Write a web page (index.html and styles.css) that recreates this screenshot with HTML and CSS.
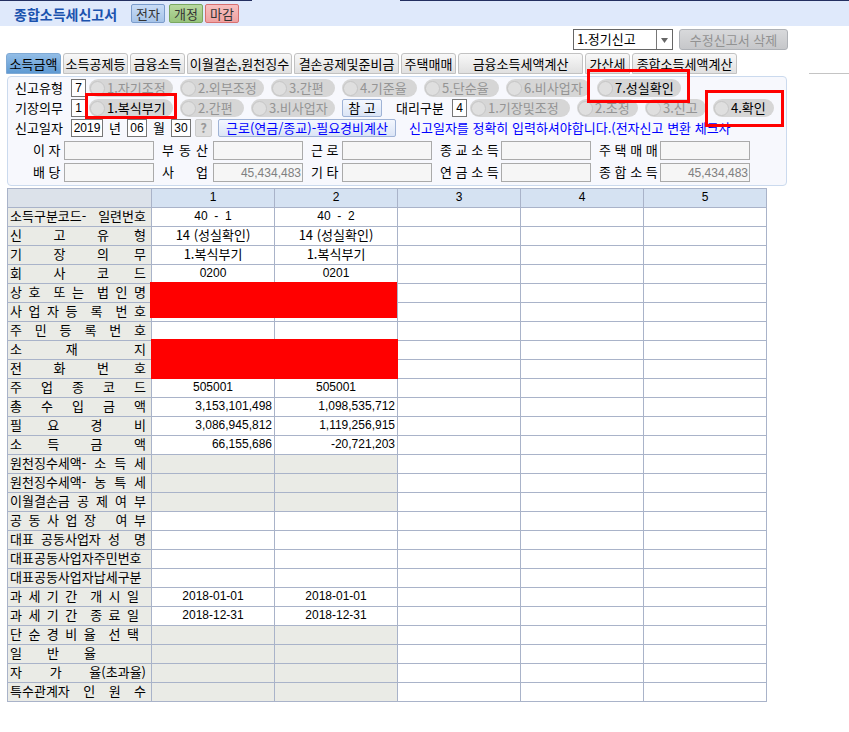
FILE: index.html
```html
<!DOCTYPE html>
<html lang="ko">
<head>
<meta charset="utf-8">
<title>종합소득세신고서</title>
<link rel="stylesheet" href="styles.css">
</head>
<body>
<header class="topbar">
  <h1>종합소득세신고서</h1>
  <button type="button" class="chip chip-blue">전자</button>
  <button type="button" class="chip chip-green">개정</button>
  <button type="button" class="chip chip-red">마감</button>
</header>

<div class="toolbar">
  <span class="picker">
    <select aria-label="신고구분"><option>1.정기신고</option></select>
    <svg viewBox="0 0 16 19" aria-hidden="true"><path d="M0 0V19" stroke="#777" stroke-width="2"/><path d="M5 8h7l-3.500 5z" fill="#666"/></svg>
  </span>
  <button type="button" class="delete" disabled>수정신고서 삭제</button>
</div>

<nav class="tabs">
  <button type="button" class="tab w55 active">소득금액</button>
  <button type="button" class="tab w65">소득공제등</button>
  <button type="button" class="tab w55">금융소득</button>
  <button type="button" class="tab w105">이월결손,원천징수</button>
  <button type="button" class="tab w105">결손공제및준비금</button>
  <button type="button" class="tab w55">주택매매</button>
  <button type="button" class="tab w125">금융소득세액계산</button>
  <button type="button" class="tab w45">가산세</button>
  <button type="button" class="tab w105">종합소득세액계산</button>
  <span class="tabs-tail"></span>
</nav>

<main>
<form class="panel">
  <div class="row">
    <label class="caption" for="kind">신고유형</label>
    <input class="box one" id="kind" value="7">
    <div class="pills">
      <label class="pill w84"><input type="radio" name="k" disabled>1.자기조정</label>
      <label class="pill w84"><input type="radio" name="k" disabled>2.외부조정</label>
      <label class="pill w64"><input type="radio" name="k" disabled>3.간편</label>
      <label class="pill w75"><input type="radio" name="k" disabled>4.기준율</label>
      <label class="pill w75"><input type="radio" name="k" disabled>5.단순율</label>
      <label class="pill w84"><input type="radio" name="k" disabled>6.비사업자</label>
      <label class="pill w84 on mark mark-wide"><input type="radio" name="k">7.성실확인</label>
    </div>
  </div>
  <div class="row">
    <label class="caption" for="duty">기장의무</label>
    <input class="box one" id="duty" value="1">
    <div class="pills">
      <label class="pill w84 on mark mark-low"><input type="radio" name="d">1.복식부기</label>
      <label class="pill w64"><input type="radio" name="d" disabled>2.간편</label>
      <label class="pill w84"><input type="radio" name="d" disabled>3.비사업자</label>
      <button type="button" class="btn note">참 고</button>
    </div>
    <label class="caption agent" for="agent">대리구분</label>
    <input class="box one" id="agent" value="4">
    <div class="pills">
      <label class="pill w100"><input type="radio" name="a" disabled>1.기장및조정</label>
      <label class="pill w61"><input type="radio" name="a" disabled>2.조정</label>
      <label class="pill w61"><input type="radio" name="a" disabled>3.신고</label>
      <label class="pill w61 on mark mark-end"><input type="radio" name="a">4.확인</label>
    </div>
  </div>
  <div class="row">
    <label class="caption" for="year">신고일자</label>
    <input class="box year" id="year" value="2019"><span class="unit">년</span>
    <input class="box two" aria-label="월" value="06"><span class="unit">월</span>
    <input class="box two" aria-label="일" value="30">
    <button type="button" class="help" disabled>?</button>
    <button type="button" class="btn calc">근로(연금/종교)-필요경비계산</button>
    <p class="notice">신고일자를 정확히 입력하셔야합니다.(전자신고 변환 체크사</p>
  </div>
  <div class="amounts">
    <label for="a1">이&nbsp;자</label><input id="a1" readonly>
    <label for="a2">부&nbsp;동&nbsp;산</label><input id="a2" readonly>
    <label for="a3">근&nbsp;로</label><input id="a3" readonly>
    <label for="a4">종&nbsp;교&nbsp;소&nbsp;득</label><input id="a4" readonly>
    <label for="a5">주&nbsp;택&nbsp;매&nbsp;매</label><input id="a5" readonly>
    <label for="b1">배&nbsp;당</label><input id="b1" readonly>
    <label for="b2">사&nbsp;업</label><input id="b2" readonly value="45,434,483">
    <label for="b3">기&nbsp;타</label><input id="b3" readonly>
    <label for="b4">연&nbsp;금&nbsp;소&nbsp;득</label><input id="b4" readonly>
    <label for="b5">종&nbsp;합&nbsp;소&nbsp;득</label><input id="b5" readonly value="45,434,483">
  </div>
</form>

<table class="sheet">
  <colgroup><col class="names"><col><col><col><col><col></colgroup>
  <thead><tr><td></td><th scope="col">1</th><th scope="col">2</th><th scope="col">3</th><th scope="col">4</th><th scope="col">5</th></tr></thead>
  <tbody>
  <tr><th scope="row">소득구분코드-&nbsp;일련번호</th><td class="code">40 &nbsp;- &nbsp;1</td><td class="code">40 &nbsp;- &nbsp;2</td><td></td><td></td><td></td></tr>
  <tr><th scope="row">신&nbsp;&nbsp;&nbsp;&nbsp;&nbsp;고&nbsp;&nbsp;&nbsp;&nbsp;&nbsp;유&nbsp;&nbsp;&nbsp;&nbsp;형</th><td>14 (성실확인)</td><td>14 (성실확인)</td><td></td><td></td><td></td></tr>
  <tr><th scope="row">기&nbsp;&nbsp;&nbsp;&nbsp;&nbsp;장&nbsp;&nbsp;&nbsp;&nbsp;&nbsp;의&nbsp;&nbsp;&nbsp;&nbsp;무</th><td>1.복식부기</td><td>1.복식부기</td><td></td><td></td><td></td></tr>
  <tr><th scope="row">회&nbsp;&nbsp;&nbsp;&nbsp;&nbsp;사&nbsp;&nbsp;&nbsp;&nbsp;&nbsp;코&nbsp;&nbsp;&nbsp;&nbsp;드</th><td class="code">0200</td><td class="code">0201</td><td></td><td></td><td></td></tr>
  <tr><th scope="row">상&nbsp;호&nbsp;&nbsp;또&nbsp;는&nbsp;&nbsp;법&nbsp;인&nbsp;명</th><td class="hidden-data"><span class="cover"></span></td><td></td><td></td><td></td><td></td></tr>
  <tr><th scope="row">사&nbsp;업&nbsp;자&nbsp;등&nbsp;&nbsp;록&nbsp;&nbsp;번&nbsp;호</th><td></td><td></td><td></td><td></td><td></td></tr>
  <tr><th scope="row">주&nbsp;&nbsp;민&nbsp;&nbsp;등&nbsp;&nbsp;록&nbsp;&nbsp;번&nbsp;&nbsp;호</th><td></td><td></td><td></td><td></td><td></td></tr>
  <tr><th scope="row">소&nbsp;&nbsp;&nbsp;&nbsp;&nbsp;&nbsp;&nbsp;재&nbsp;&nbsp;&nbsp;&nbsp;&nbsp;&nbsp;&nbsp;&nbsp;&nbsp;지</th><td class="hidden-data"><span class="cover cover-tall"></span></td><td></td><td></td><td></td><td></td></tr>
  <tr><th scope="row">전&nbsp;&nbsp;&nbsp;&nbsp;&nbsp;화&nbsp;&nbsp;&nbsp;&nbsp;&nbsp;번&nbsp;&nbsp;&nbsp;&nbsp;호</th><td></td><td></td><td></td><td></td><td></td></tr>
  <tr><th scope="row">주&nbsp;&nbsp;&nbsp;업&nbsp;&nbsp;&nbsp;종&nbsp;&nbsp;&nbsp;코&nbsp;&nbsp;&nbsp;드</th><td class="code">505001</td><td class="code">505001</td><td></td><td></td><td></td></tr>
  <tr><th scope="row">총&nbsp;&nbsp;&nbsp;수&nbsp;&nbsp;&nbsp;입&nbsp;&nbsp;&nbsp;금&nbsp;&nbsp;&nbsp;액</th><td class="money">3,153,101,498</td><td class="money">1,098,535,712</td><td></td><td></td><td></td></tr>
  <tr><th scope="row">필&nbsp;&nbsp;&nbsp;&nbsp;요&nbsp;&nbsp;&nbsp;&nbsp;&nbsp;경&nbsp;&nbsp;&nbsp;&nbsp;&nbsp;비</th><td class="money">3,086,945,812</td><td class="money">1,119,256,915</td><td></td><td></td><td></td></tr>
  <tr><th scope="row">소&nbsp;&nbsp;&nbsp;&nbsp;득&nbsp;&nbsp;&nbsp;&nbsp;&nbsp;금&nbsp;&nbsp;&nbsp;&nbsp;&nbsp;액</th><td class="money">66,155,686</td><td class="money">-20,721,203</td><td></td><td></td><td></td></tr>
  <tr><th scope="row">원천징수세액-&nbsp;소&nbsp;득&nbsp;세</th><td class="off"></td><td class="off"></td><td></td><td></td><td></td></tr>
  <tr><th scope="row">원천징수세액-&nbsp;농&nbsp;특&nbsp;세</th><td class="off"></td><td class="off"></td><td></td><td></td><td></td></tr>
  <tr><th scope="row">이월결손금&nbsp;공&nbsp;제&nbsp;여&nbsp;부</th><td class="off"></td><td class="off"></td><td></td><td></td><td></td></tr>
  <tr><th scope="row">공&nbsp;동&nbsp;사&nbsp;업&nbsp;장&nbsp;&nbsp;&nbsp;여&nbsp;부</th><td></td><td></td><td></td><td></td><td></td></tr>
  <tr><th scope="row">대표&nbsp;공동사업자&nbsp;성&nbsp;&nbsp;명</th><td></td><td></td><td></td><td></td><td></td></tr>
  <tr><th scope="row">대표공동사업자주민번호</th><td></td><td></td><td></td><td></td><td></td></tr>
  <tr><th scope="row">대표공동사업자납세구분</th><td></td><td></td><td></td><td></td><td></td></tr>
  <tr><th scope="row" class="short">과&nbsp;세&nbsp;기&nbsp;간&nbsp;&nbsp;개&nbsp;시&nbsp;일</th><td class="code">2018-01-01</td><td class="code">2018-01-01</td><td></td><td></td><td></td></tr>
  <tr><th scope="row" class="short">과&nbsp;세&nbsp;기&nbsp;간&nbsp;&nbsp;종&nbsp;료&nbsp;일</th><td class="code">2018-12-31</td><td class="code">2018-12-31</td><td></td><td></td><td></td></tr>
  <tr><th scope="row" class="short">단&nbsp;순&nbsp;경&nbsp;비&nbsp;율&nbsp;&nbsp;선&nbsp;택</th><td class="off"></td><td class="off"></td><td></td><td></td><td></td></tr>
  <tr><th scope="row" class="shorter">일&nbsp;&nbsp;&nbsp;&nbsp;반&nbsp;&nbsp;&nbsp;&nbsp;율</th><td class="off"></td><td class="off"></td><td></td><td></td><td></td></tr>
  <tr><th scope="row">자&nbsp;&nbsp;&nbsp;&nbsp;가&nbsp;&nbsp;&nbsp;&nbsp;율(초과율)</th><td class="off"></td><td class="off"></td><td></td><td></td><td></td></tr>
  <tr><th scope="row">특수관계자&nbsp;&nbsp;인&nbsp;&nbsp;원&nbsp;&nbsp;수</th><td class="off"></td><td class="off"></td><td></td><td></td><td></td></tr>
  </tbody>
</table>
</main>
</body>
</html>
```
FILE: styles.css
```css
* { box-sizing: border-box; }

body {
  margin: 0;
  background: #fff;
  color: #000;
  font: 13px/18px "Noto Sans CJK KR", sans-serif;
}

button, input, select {
  margin: 0;
  padding: 0;
  font: inherit;
  color: inherit;
}

button { white-space: nowrap; }

.topbar {
  position: relative;
  display: flex;
  align-items: center;
  height: 26px;
  padding: 1px 14px 0;
  background: #dfe9fb;
}

/* Dark window edge, broken where the menu above opens */
.topbar::before {
  content: "";
  position: absolute;
  inset: 0 0 auto;
  height: 1px;
  background: linear-gradient(90deg, #232f60 252px, #dfe9fb 252px 400px, #232f60 400px);
}

h1 {
  margin: 0 14px 0 0;
  color: #1a52ae;
  font-size: 14px;
  font-weight: 700;
  line-height: 20px;
}

.chip {
  width: 34px;
  height: 19px;
  margin-right: 4px;
  border: 1px solid;
  border-radius: 2px;
  line-height: 16px;
  color: #333;
}

.chip-blue { background: linear-gradient(#c8dcf6, #a6c3e8); border-color: #7b9ccb; }
.chip-green { background: linear-gradient(#b8d8a0, #98c47c); border-color: #7aa860; margin-right: 2px; }
.chip-red { background: linear-gradient(#f7c0c0, #f0a2a2); border-color: #d87070; }

.toolbar {
  display: flex;
  justify-content: flex-end;
  gap: 6px;
  max-width: 788px;
  padding-top: 3px;
}

.picker {
  position: relative;
  width: 100px;
  height: 21px;
}

.picker select {
  width: 100%;
  height: 100%;
  padding: 0 0 3px 3px;
  appearance: none;
  border: 1px solid #666;
  border-radius: 0;
  background: #fff;
}

.picker svg {
  position: absolute;
  top: 1px;
  right: 1px;
  width: 16px;
  height: 19px;
  pointer-events: none;
}

.delete {
  width: 109px;
  height: 21px;
  border: 1px solid #aeb1b6;
  border-radius: 3px;
  background: linear-gradient(#d8d9db, #c6c7ca);
  color: #929292;
  line-height: 18px;
}

.tabs {
  display: flex;
  gap: 2px;
  margin-top: 3px;
  padding-left: 6px;
}

.tab {
  height: 21px;
  border: 1px solid #c2c2c2;
  border-radius: 3px 3px 0 0;
  background: linear-gradient(#f8f8f8, #e0e0e0);
  line-height: 16px;
}

.tab.active {
  border-color: #7fa9d4;
  background: linear-gradient(#92bde6, #5f9ad3);
}

.tabs-tail {
  flex: 1;
  margin-left: 70px;
  border-bottom: 1px solid #c4c4c4;
}

.w45 { width: 45px; }
.w55 { width: 55px; }
.w61 { width: 61px; }
.w64 { width: 64px; }
.w65 { width: 65px; }
.w75 { width: 75px; }
.w84 { width: 84px; }
.w100 { width: 100px; }
.w105 { width: 105px; }
.w125 { width: 125px; }

main { padding: 2px 0 0 7px; }

.panel {
  display: flex;
  flex-direction: column;
  gap: 2px;
  max-width: 780px;
  padding: 2px 7px 3px;
  border: 1px solid #cbdaee;
  border-radius: 4px;
  background: #f7f8fd;
}

.row {
  display: flex;
  align-items: center;
  height: 18px;
  white-space: nowrap;
}

.caption { width: 56px; flex: none; }

.caption.agent { margin-left: 14px; }

.box {
  flex: none;
  height: 18px;
  border: 1px solid #777;
  background: #fff;
  font: 12px/16px "Liberation Sans", sans-serif;
  text-align: center;
}

.one { width: 15px; }
.two { width: 20px; }
.year { width: 32px; }

.unit { width: 24px; text-align: center; }

.pills {
  display: flex;
  gap: 7px;
  margin-left: 3px;
}

.pill {
  position: relative;
  display: flex;
  align-items: center;
  flex: none;
  height: 18px;
  border-radius: 9px;
  background: #d6d6d6;
  color: #949494;
}

.pill input {
  width: 15px;
  height: 15px;
  margin: 0 2px 0 1px;
  appearance: none;
  border: 1px solid #c6c6c6;
  border-radius: 50%;
  background: #dfdfdf;
}

.pill.on { color: #000; }

.mark::after {
  content: "";
  position: absolute;
  z-index: 1;
  border: 3px solid #f00;
  pointer-events: none;
}

.mark-wide::after { inset: -10px -9px -6px -10px; }
.mark-low::after { inset: -6px -4px -2px; }
.mark-end::after { inset: -9px -10px -10px -8px; }

.btn {
  height: 18px;
  border: 1px solid #9fb3d6;
  border-radius: 2px;
  background: linear-gradient(#f3f7fe, #dbe5f6);
  line-height: 16px;
}

.note { width: 40px; }

.calc {
  width: 178px;
  margin-left: 6px;
  color: #00f;
}

.help {
  width: 17px;
  height: 18px;
  margin-left: 4px;
  border: 1px solid #ccc;
  border-radius: 2px;
  background: #dedede;
  color: #999;
  font-weight: 700;
  line-height: 16px;
}

.notice {
  margin: 0 0 0 13px;
  color: #00f;
}

.amounts {
  display: grid;
  grid-template-columns: 44px 90px 49px 90px 29px 90px 59px 90px 59px 90px;
  gap: 3px 5px;
  padding-top: 2px;
}

.amounts label {
  padding-left: 3px;
  text-align: justify;
  text-align-last: justify;
}

.amounts label:nth-child(20n + 1),
.amounts label:nth-child(20n + 11) { padding-left: 18px; }

.amounts input {
  width: 100%;
  height: 19px;
  padding-right: 1px;
  border: 1px solid #aaa;
  background: #f6f6f6;
  color: #808080;
  font: 12px/17px "Liberation Sans", sans-serif;
  text-align: right;
}

.sheet {
  width: 100%;
  max-width: 760px;
  margin-top: 2px;
  border-collapse: collapse;
  table-layout: fixed;
}

.names { width: 144px; }

.sheet th, .sheet td {
  height: 19px;
  padding: 0;
  border: 1px solid #a9b3c9;
  font-weight: 400;
  line-height: 16px;
  text-align: center;
  vertical-align: top;
  white-space: nowrap;
}

.sheet thead th, .sheet .code, .sheet .money {
  font-family: "Liberation Sans", sans-serif;
  font-size: 12px;
}

.sheet thead th { background: #d5e2f2; }
.sheet thead td { background: #dce2ea; }

.sheet tbody th {
  padding: 0 5px 0 2px;
  background: #eaebe6;
  text-align: justify;
  text-align-last: justify;
}

.sheet tbody .short { padding-right: 12px; }
.sheet tbody .shorter { padding-right: 55px; }

.sheet .money {
  padding-right: 2px;
  text-align: right;
}

.sheet .off { background: #eaebe6; }

.sheet .hidden-data { position: relative; }

.cover {
  position: absolute;
  top: -2px;
  left: -2px;
  width: calc(200% + 3px);
  height: 200%;
  background: #f00;
}

.cover-tall {
  left: -1px;
  height: calc(200% + 4px);
}
```
